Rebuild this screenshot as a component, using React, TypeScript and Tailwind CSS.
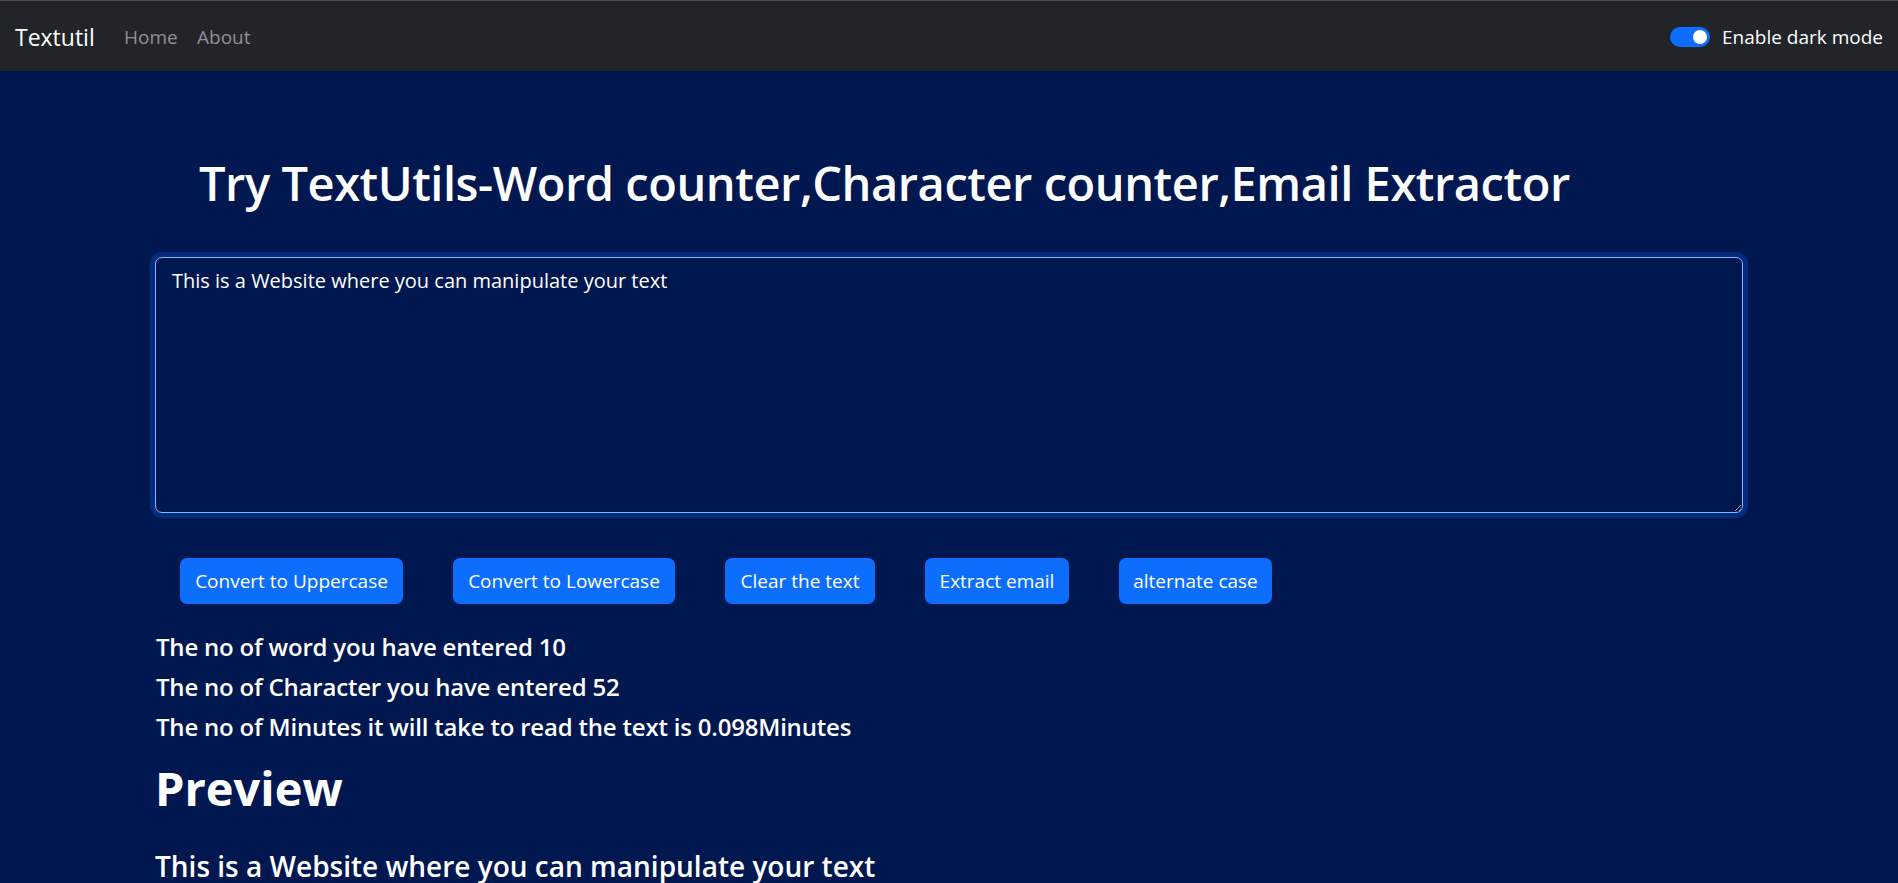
const buttons = [
  { label: "Convert to Uppercase", width: "w-[223px]" },
  { label: "Convert to Lowercase", width: "w-[222px]" },
  { label: "Clear the text", width: "w-[150px]" },
  { label: "Extract email", width: "w-[144px]" },
  { label: "alternate case", width: "w-[153px]" },
];

const text = "This is a Website where you can manipulate your text";

const Navbar = () => {
  return (
    <nav className="h-[71px] pt-[2px] bg-[#212529] border-t border-[#4d4f52] flex items-center justify-between px-[15px]">
      <div className="flex items-center">
        <span className="w-[109px] text-[23px] text-white">Textutil</span>
        <span className="w-[73px] text-[19px] text-[#8f9193]">Home</span>
        <span className="text-[19px] text-[#8f9193]">About</span>
      </div>
      <div className="flex items-center">
        <span className="w-[40px] h-[20px] rounded-full bg-[#0d6efd] flex items-center justify-end pr-[3px]">
          <span className="w-[14px] h-[14px] rounded-full bg-white" />
        </span>
        <span className="ml-[12px] text-[19px] text-white">Enable dark mode</span>
      </div>
    </nav>
  );
};

const App = () => {
  const words = text.split(/\s+/).filter((w) => w.length > 0).length;
  return (
    <div className="min-h-[883px] bg-[#00174f] text-white font-['Open_Sans',sans-serif] overflow-hidden">
      <Navbar />
      <main className="px-[155px]">
        <h1 className="mt-[82px] ml-[44px] text-[47px] leading-[60px] tracking-[-0.45px] font-semibold">
          Try TextUtils-Word counter,Character counter,Email Extractor
        </h1>
        <textarea
          readOnly
          defaultValue={text}
          rows={8}
          className="block mt-[44px] w-full h-[256px] bg-[#00174f] text-white text-[20px] leading-[30px] px-[16px] py-[8px] border border-[#86b7fe] rounded-[7px] outline-none shadow-[0_0_0_5px_#032c7d]"
        />
        <div className="flex gap-[50px] mt-[45px] ml-[25px]">
          {buttons.map((b) => (
            <button
              key={b.label}
              type="button"
              className={`${b.width} h-[46px] rounded-[7px] bg-[#0d6efd] text-white text-[19px] text-center whitespace-nowrap`}
            >
              {b.label}
            </button>
          ))}
        </div>
        <div className="mt-[28px] ml-[1px]">
          <h5 className="text-[24px] leading-[30px] tracking-[-0.2px] font-semibold mb-[10px]">
            The no of word you have entered {words}
          </h5>
          <h5 className="text-[24px] leading-[30px] tracking-[-0.2px] font-semibold mb-[10px]">
            The no of Character you have entered {text.length}
          </h5>
          <h5 className="text-[24px] leading-[30px] tracking-[-0.2px] font-semibold">
            The no of Minutes it will take to read the text is 0.098Minutes
          </h5>
        </div>
        <h1 className="mt-[16px] text-[47px] leading-[60px] font-bold">Preview</h1>
        <h4 className="mt-[30px] text-[28px] leading-[36px] font-semibold">{text}</h4>
      </main>
    </div>
  );
};

export default App;
